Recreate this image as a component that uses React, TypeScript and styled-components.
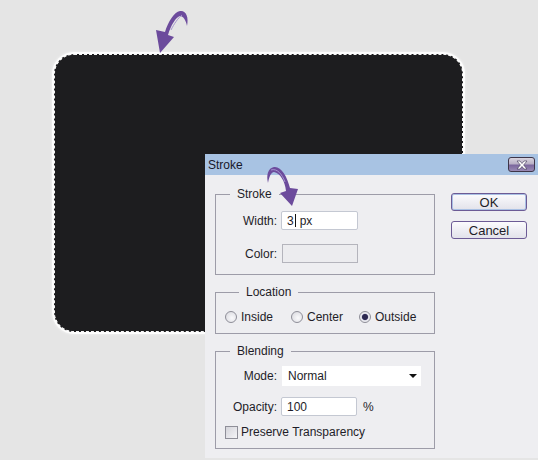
import React from "react";
import styled, {createGlobalStyle} from "styled-components";

const Global = createGlobalStyle`
  html, body {
    margin: 0;
    padding: 0;
    background: #e5e5e5;
  }
`;

const App = () => {
    return (
        <Page>
            <Global />
            <Shape />
            <Dialog>
                <TitleBar>
                    <Title>Stroke</Title>
                    <CloseButton>
                        <svg width="14" height="10" viewBox="0 0 14 10">
                            <path d="M2 1 L5 1 L7 3.5 L9 1 L12 1 L8.6 5 L12 9 L9 9 L7 6.5 L5 9 L2 9 L5.4 5 Z"
                                  fill="#fff" stroke="#3b3250" strokeWidth="0.6" />
                        </svg>
                    </CloseButton>
                </TitleBar>
                <Body>
                    <Groups>
                        <Group $pad="10px 0 11px">
                            <Legend>Stroke</Legend>
                            <FieldRow>
                                <Label>Width:</Label>
                                <TextBox $width={77}>3<Caret />px</TextBox>
                            </FieldRow>
                            <FieldRow $top={14}>
                                <Label>Color:</Label>
                                <Swatch />
                            </FieldRow>
                        </Group>
                        <Group $pad="11px 0 9px 9px">
                            <Legend>Location</Legend>
                            <RadioRow>
                                <RadioItem $width={66}><Radio />Inside</RadioItem>
                                <RadioItem $width={68}><Radio />Center</RadioItem>
                                <RadioItem><Radio $on />Outside</RadioItem>
                            </RadioRow>
                        </Group>
                        <Group $pad="8px 0 9px">
                            <Legend>Blending</Legend>
                            <FieldRow>
                                <Label>Mode:</Label>
                                <Select>Normal<DropArrow /></Select>
                            </FieldRow>
                            <FieldRow $top={11}>
                                <Label>Opacity:</Label>
                                <TextBox $width={76}>100</TextBox>
                                <Unit>%</Unit>
                            </FieldRow>
                            <CheckRow>
                                <Check />Preserve Transparency
                            </CheckRow>
                        </Group>
                    </Groups>
                    <Buttons>
                        <Button $primary>OK</Button>
                        <Button>Cancel</Button>
                    </Buttons>
                </Body>
            </Dialog>
            <Arrows width="538" height="460" viewBox="0 0 538 460">
                <path d="M187,26 C189,17 186,10 180,11 C174,12 168,22 165,32 L156,30 L160,53 L174,37 L168,35 C171,25 176,17 180,16 C183,16 186,20 187,26 Z"
                      fill="#6c4b9c" />
                <path d="M182,15 C178,18 174,24 171,30" stroke="#a593cf" strokeWidth="1" fill="none" />
                <path d="M268,183 C266,175 268,168 274,167 C281,166 287,176 290,188 L298,189 L292,206 L280,193 L286,191 C285,181 280,173 274,172 C271,172 269,177 268,183 Z"
                      fill="#6c4b9c" />
                <path d="M271,170 C277,168 282,174 285,182" stroke="#a593cf" strokeWidth="1" fill="none" />
            </Arrows>
        </Page>
    );
};

export default App;

const Page = styled.div`
  position: relative;
  width: 538px;
  height: 460px;
  overflow: hidden;
  background: #e5e5e5;
  font-family: "Liberation Sans", Arial, sans-serif;
  font-size: 12px;
  color: #1e1d28;
`;

const Shape = styled.div`
  position: absolute;
  left: 54px;
  top: 54px;
  width: 409px;
  height: 278px;
  box-sizing: border-box;
  background: #1d1d1f;
  border: 1px dashed #f4f4f4;
  border-radius: 20px;
  box-shadow: 0 0 0 2px rgba(255, 255, 255, 0.85), 0 0 2px 3px rgba(255, 255, 255, 0.35);
`;

const Dialog = styled.div`
  position: absolute;
  left: 205px;
  top: 154px;
  width: 333px;
  height: 304px;
  background: #eeeef1;
  display: flex;
  flex-direction: column;
`;

const TitleBar = styled.div`
  height: 21px;
  background: #a8c3e3;
  display: flex;
  align-items: center;
  justify-content: space-between;
  padding: 0 3px 0 3px;
`;

const Title = styled.span`
  font-size: 12px;
  color: #18182a;
`;

const CloseButton = styled.div`
  width: 27px;
  height: 15px;
  box-sizing: border-box;
  border: 1px solid #3e3548;
  border-radius: 3px;
  background: linear-gradient(#d8d3de 0%, #b9b0c6 45%, #7b679d 55%, #9a8ab5 100%);
  display: flex;
  align-items: center;
  justify-content: center;
`;

const Body = styled.div`
  display: flex;
  gap: 16px;
  padding: 12px 0 0 10px;
`;

const Groups = styled.div`
  display: flex;
  flex-direction: column;
  gap: 10px;
  width: 220px;
`;

const Group = styled.fieldset<{ $pad: string }>`
  margin: 0;
  border: 1px solid #9d9ca8;
  padding: ${p => p.$pad};
  min-width: 0;
  display: flex;
  flex-direction: column;
`;

const Legend = styled.legend`
  padding: 0 7px;
  margin-left: 14px;
  line-height: 14px;
  font-size: 12px;
`;

const FieldRow = styled.div<{ $top?: number }>`
  display: flex;
  align-items: center;
  margin-top: ${p => p.$top ?? 0}px;
`;

const Label = styled.span`
  width: 61px;
  text-align: right;
  margin-right: 5px;
`;

const TextBox = styled.div<{ $width: number }>`
  width: ${p => p.$width}px;
  height: 19px;
  box-sizing: border-box;
  background: #fff;
  border: 1px solid #c4c8d2;
  border-radius: 2px;
  display: flex;
  align-items: center;
  padding-left: 5px;
  margin-left: -1px;
`;

const Caret = styled.span`
  display: inline-block;
  width: 1px;
  height: 13px;
  background: #111;
  margin: 0 4px 0 1px;
`;

const Swatch = styled.div`
  width: 76px;
  height: 19px;
  box-sizing: border-box;
  background: #ececef;
  border: 1px solid #b4b4bc;
`;

const RadioRow = styled.div`
  display: flex;
  align-items: center;
  height: 14px;
`;

const RadioItem = styled.label<{ $width?: number }>`
  display: flex;
  align-items: center;
  gap: 4px;
  width: ${p => (p.$width ? `${p.$width}px` : "auto")};
`;

const Radio = styled.span<{ $on?: boolean }>`
  width: 12px;
  height: 12px;
  box-sizing: border-box;
  border-radius: 50%;
  border: 1px solid #8e8e98;
  background: ${p => p.$on
    ? "radial-gradient(circle, #2c2850 0 2.5px, #6a6690 3px, #e6e6ec 3.6px, #f7f7fa 100%)"
    : "radial-gradient(circle at 60% 60%, #fafafc 0, #d6d6dc 100%)"};
`;

const Select = styled.div`
  width: 139px;
  height: 20px;
  box-sizing: border-box;
  background: #fff;
  display: flex;
  align-items: center;
  justify-content: space-between;
  padding: 0 4px 0 6px;
`;

const DropArrow = styled.span`
  width: 0;
  height: 0;
  border-left: 4px solid transparent;
  border-right: 4px solid transparent;
  border-top: 4px solid #111;
`;

const Unit = styled.span`
  margin-left: 6px;
`;

const CheckRow = styled.label`
  display: flex;
  align-items: center;
  gap: 3px;
  margin-top: 9px;
  padding-left: 9px;
  height: 14px;
`;

const Check = styled.span`
  width: 13px;
  height: 13px;
  box-sizing: border-box;
  border: 1px solid #8e8e98;
  background: linear-gradient(135deg, #d4d4da, #f4f4f7);
`;

const Buttons = styled.div`
  display: flex;
  flex-direction: column;
  gap: 10px;
  margin-top: 6px;
`;

const Button = styled.div<{ $primary?: boolean }>`
  width: 76px;
  height: 18px;
  box-sizing: border-box;
  border: 1px solid #6c5b95;
  border-radius: 3px;
  background: linear-gradient(#fbfbfd, #e2e2ea);
  box-shadow: ${p => (p.$primary ? "inset 0 0 0 1px #a9c0e4" : "none")};
  display: flex;
  align-items: center;
  justify-content: center;
  font-size: 13px;
`;

const Arrows = styled.svg`
  position: absolute;
  left: 0;
  top: 0;
  pointer-events: none;
`;
